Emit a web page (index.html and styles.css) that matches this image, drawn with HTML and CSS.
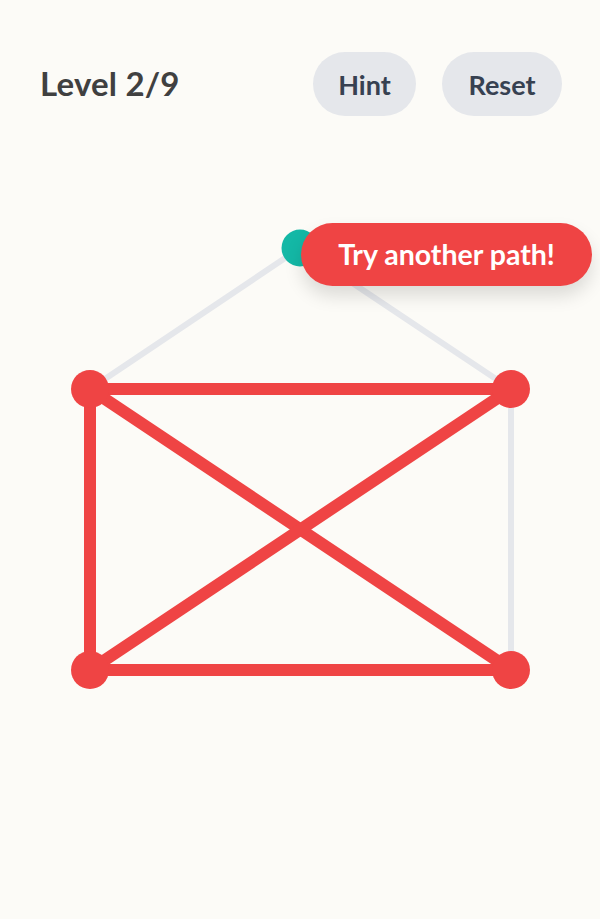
FILE: index.html
```html
<!DOCTYPE html>
<html>
<head>
<meta charset="utf-8">
<link rel="stylesheet" href="styles.css">
</head>
<body>
<div class="app">
  <header class="topbar">
    <div class="level">Level 2/9</div>
    <div class="actions">
      <button class="btn btn-hint">Hint</button>
      <button class="btn btn-reset">Reset</button>
    </div>
  </header>
  <div class="board">
    <svg class="graph" width="600" height="803" viewBox="0 0 600 803">
      <g stroke="#e5e7eb" stroke-width="6" stroke-linecap="round">
        <line x1="300" y1="132" x2="90" y2="273"/>
        <line x1="300" y1="132" x2="511" y2="273"/>
        <line x1="511" y1="273" x2="511" y2="554"/>
      </g>
      <g stroke="#ef4444" stroke-width="12" stroke-linecap="round">
        <line x1="90" y1="273" x2="511" y2="273"/>
        <line x1="90" y1="273" x2="90" y2="554"/>
        <line x1="90" y1="273" x2="511" y2="554"/>
        <line x1="511" y1="273" x2="90" y2="554"/>
        <line x1="90" y1="554" x2="511" y2="554"/>
      </g>
      <circle cx="300" cy="132" r="18.5" fill="#14b8a6"/>
      <g fill="#ef4444">
        <circle cx="90" cy="273" r="19"/>
        <circle cx="511" cy="273" r="19"/>
        <circle cx="90" cy="554" r="19"/>
        <circle cx="511" cy="554" r="19"/>
      </g>
    </svg>
    <div class="toast">Try another path!</div>
  </div>
</div>
</body>
</html>
```
FILE: styles.css
```css
html, body {
  margin: 0;
  padding: 0;
  background: #fcfbf7;
}
body {
  width: 600px;
  height: 919px;
  overflow: hidden;
  font-family: "Lato", "Noto Sans", sans-serif;
}
.app {
  display: flex;
  flex-direction: column;
}
.topbar {
  display: flex;
  justify-content: space-between;
  align-items: center;
  padding: 52px 38px 0 40px;
  height: 64px;
}
.level {
  font-size: 33px;
  font-weight: 700;
  color: #404040;
  letter-spacing: 0.2px;
  margin-top: -3px;
}
.actions {
  display: flex;
  gap: 26px;
}
.btn {
  height: 64px;
  padding: 0;
  border: none;
  border-radius: 32px;
  background: #e5e7eb;
  color: #374151;
  font-family: inherit;
  font-size: 27px;
  font-weight: 700;
}
.btn-hint {
  width: 103px;
}
.btn-reset {
  width: 120px;
}
.board {
  position: relative;
  height: 803px;
}
.graph {
  display: block;
}
.toast {
  position: absolute;
  left: 301px;
  top: 107px;
  width: 291px;
  height: 63px;
  border-radius: 32px;
  background: #ef4444;
  color: #ffffff;
  font-size: 28.5px;
  font-weight: 700;
  display: flex;
  align-items: center;
  justify-content: center;
  padding-bottom: 2px;
  box-sizing: border-box;
  box-shadow: 0 10px 18px rgba(0, 0, 0, 0.13);
}
```
